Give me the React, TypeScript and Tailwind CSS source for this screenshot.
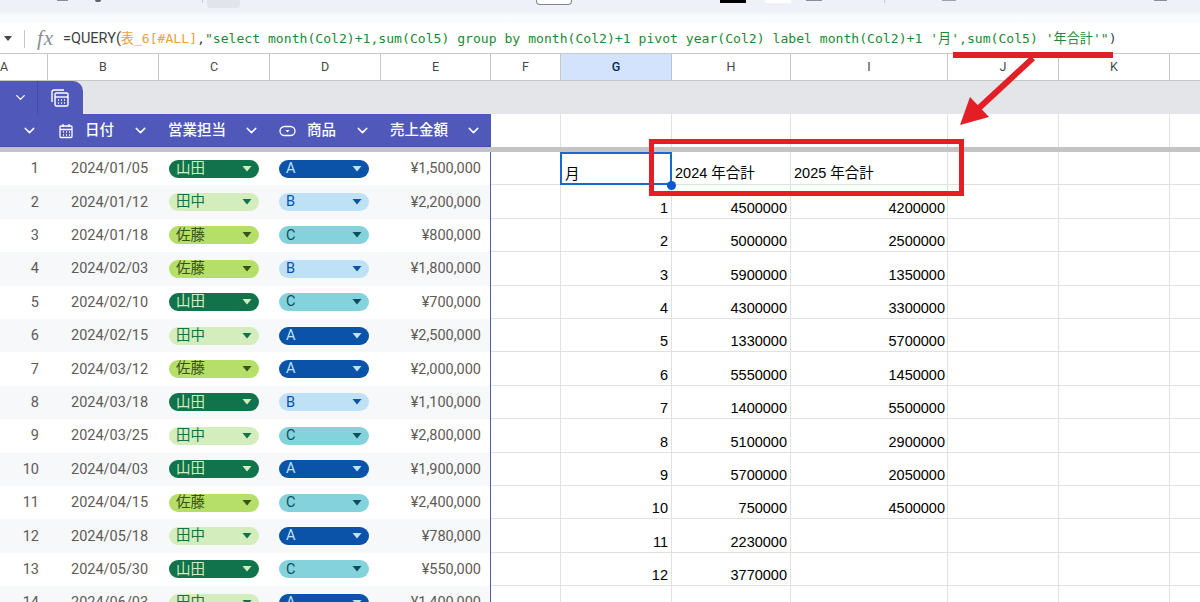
import { ChevronDown } from "lucide-react";

const font = "font-['Roboto','Noto_Sans_CJK_JP',sans-serif]";

type Person = "山田" | "田中" | "佐藤";
type Product = "A" | "B" | "C";

const personStyle: Record<Person, string> = {
  山田: "bg-[#11734b] text-[#d4edbc]",
  田中: "bg-[#d4edbc] text-[#11734b]",
  佐藤: "bg-[#b5df68] text-[#38521a]",
};

const productStyle: Record<Product, string> = {
  A: "bg-[#0a53a8] text-[#bfe1f6]",
  B: "bg-[#bfe1f6] text-[#0a53a8]",
  C: "bg-[#84d3dc] text-[#0b4f5a]",
};

const orders: [number, string, Person, Product, string][] = [
  [1, "2024/01/05", "山田", "A", "¥1,500,000"],
  [2, "2024/01/12", "田中", "B", "¥2,200,000"],
  [3, "2024/01/18", "佐藤", "C", "¥800,000"],
  [4, "2024/02/03", "佐藤", "B", "¥1,800,000"],
  [5, "2024/02/10", "山田", "C", "¥700,000"],
  [6, "2024/02/15", "田中", "A", "¥2,500,000"],
  [7, "2024/03/12", "佐藤", "A", "¥2,000,000"],
  [8, "2024/03/18", "山田", "B", "¥1,100,000"],
  [9, "2024/03/25", "田中", "C", "¥2,800,000"],
  [10, "2024/04/03", "山田", "A", "¥1,900,000"],
  [11, "2024/04/15", "佐藤", "C", "¥2,400,000"],
  [12, "2024/05/18", "田中", "A", "¥780,000"],
  [13, "2024/05/30", "山田", "C", "¥550,000"],
  [14, "2024/06/03", "田中", "A", "¥1,400,000"],
];

const pivot: [string, string, string][] = [
  ["1", "4500000", "4200000"],
  ["2", "5000000", "2500000"],
  ["3", "5900000", "1350000"],
  ["4", "4300000", "3300000"],
  ["5", "1330000", "5700000"],
  ["6", "5550000", "1450000"],
  ["7", "1400000", "5500000"],
  ["8", "5100000", "2900000"],
  ["9", "5700000", "2050000"],
  ["10", "750000", "4500000"],
  ["11", "2230000", ""],
  ["12", "3770000", ""],
  ["", "", ""],
];

function Chip({ label, className }: { label: string; className: string }) {
  return (
    <div className={`flex h-[18px] w-[90px] items-center justify-between rounded-full pl-[7px] pr-[4px] text-[14.5px] ${className}`}>
      <span>{label}</span>
      <svg width="14" height="6" viewBox="0 0 14 6" className="mr-[1px]">
        <path d="M2.5 0h9L7 5.5z" fill="currentColor" />
      </svg>
    </div>
  );
}

function HeaderCol({ width, label, icon }: { width: string; label: string; icon?: React.ReactNode }) {
  return (
    <div className={`flex h-full items-center pl-[10px] pr-[9px] pt-[1px] ${width}`}>
      {icon}
      <span className="flex-1 truncate pt-[1px] text-[14.5px] font-medium">{label}</span>
      <ChevronDown size={17} strokeWidth={2} className="shrink-0" />
    </div>
  );
}

function ColumnHead({ label, width, active }: { label: string; width: string; active?: boolean }) {
  return (
    <div
      className={`flex h-full shrink-0 items-center justify-center border-r text-[12.5px] ${width} ${
        active ? "border-[#b5c4dc] bg-[#d3e3fd] font-medium text-[#0b2a5b]" : "border-[#c7c7c7] text-[#444746]"
      }`}
    >
      {label}
    </div>
  );
}

function RightCells({ month, y2024, y2025 }: { month?: string; y2024?: string; y2025?: string }) {
  return (
    <>
      <div className="h-full w-[70px] shrink-0 border-r border-b border-[#e1e1e1]" />
      <div className="flex h-full w-[111px] shrink-0 items-end justify-end border-r border-b border-[#e1e1e1] pr-[3px] leading-[19px]">
        {month}
      </div>
      <div className="flex h-full w-[119px] shrink-0 items-end justify-end border-r border-b border-[#e1e1e1] pr-[3px] leading-[19px]">
        {y2024}
      </div>
      <div className="flex h-full w-[157px] shrink-0 items-end justify-end border-r border-b border-[#e1e1e1] pr-[2px] leading-[19px]">
        {y2025}
      </div>
      <div className="h-full w-[111px] shrink-0 border-r border-b border-[#e1e1e1]" />
      <div className="h-full w-[111px] shrink-0 border-r border-b border-[#e1e1e1]" />
      <div className="h-full flex-1 border-b border-[#e1e1e1]" />
    </>
  );
}

function OrderRow({ order, index }: { order: (typeof orders)[number]; index: number }) {
  const [no, date, person, product, amount] = order;
  return (
    <div className={`flex h-[33.4px] w-[491px] shrink-0 items-center border-r border-[#5059b5] text-[14.5px] text-[#5f5a58] ${index % 2 ? "bg-[#f6f8f9]" : "bg-white"}`}>
      <div className="w-[47px] pr-[8px] pt-[1px] text-right">{no}</div>
      <div className="w-[111px] pl-[24px] pt-[1px]">{date}</div>
      <div className="w-[111px] pl-[11px]">
        <Chip label={person} className={personStyle[person]} />
      </div>
      <div className="w-[111px] pl-[10px]">
        <Chip label={product} className={productStyle[product]} />
      </div>
      <div className="flex-1 pr-[9px] pt-[1px] text-right">{amount}</div>
    </div>
  );
}

export default function App() {
  return (
    <div className={`relative h-[602px] w-[1200px] overflow-hidden bg-white text-[14px] text-[#1f1f1f] ${font}`}>
      {/* toolbar, cropped at the top of the picture */}
      <div className="flex h-[23px] items-start bg-gradient-to-b from-[#eef1f7] from-50% to-[#f9fbfd] to-70%">
        <div className="ml-[57px] h-[1px] w-[11px] bg-[#8a8d91]" />
        <div className="ml-[27px] h-[2px] w-[6px] rounded-b bg-[#5f6368]" />
        <div className="ml-[101px] h-[3px] w-[1px] bg-[#c7c7c7]" />
        <div className="ml-[4px] h-[8px] w-[33px] rounded-b bg-[#e1e5ea]" />
        <div className="ml-[296px] h-[5px] w-[36px] rounded-b border border-t-0 border-[#80868b] bg-white" />
        <div className="ml-[148px] h-[3px] w-[26px] bg-black" />
        <div className="ml-[19px] h-[3px] w-[26px] bg-white" />
        <div className="ml-[15px] h-[1px] w-[16px] bg-[#8a8d91]" />
        <div className="ml-[62px] h-[3px] w-[1px] bg-[#c7c7c7]" />
        <div className="ml-[57px] h-[1px] w-[14px] bg-[#a0a4a8]" />
        <div className="ml-[198px] h-[1px] w-[13px] bg-[#8a8d91]" />
      </div>

      {/* formula bar */}
      <div className="flex h-[31px] items-center border-b border-[#c7c7c7] bg-white pt-[1px]">
        <svg width="10" height="6" viewBox="0 0 10 6" className="ml-[3px]">
          <path d="M1 0h8L5 5z" fill="#444746" />
        </svg>
        <div className="ml-[11px] h-[18px] w-px bg-[#c7c7c7]" />
        <span className="ml-[12px] w-[26px] font-['Liberation_Serif',serif] text-[21px] italic tracking-[1px] text-[#8a8d91]">fx</span>
        <div className="whitespace-nowrap font-['DejaVu_Sans_Mono','Noto_Sans_CJK_JP',monospace] text-[13.1px] text-[#3c4043]">
          <span className="font-['Roboto','Noto_Sans_CJK_JP',sans-serif] text-[14.5px]">=QUERY(</span>
          <span className="text-[#e8a33d]">表_6[#ALL]</span>
          <span>,</span>
          <span className="text-[#1a8a35]">
            "select month(Col2)+1,sum(Col5) group by month(Col2)+1 pivot year(Col2) label month(Col2)+1 '月',sum(Col5) '年合計'"
          </span>
          <span>)</span>
        </div>
      </div>

      {/* column letters */}
      <div className="flex h-[27px] border-b border-[#c7c7c7] bg-white">
        <div className="flex h-full w-[48px] shrink-0 items-center border-r border-[#c7c7c7] text-[12.5px] text-[#444746]">A</div>
        <ColumnHead label="B" width="w-[111px]" />
        <ColumnHead label="C" width="w-[111px]" />
        <ColumnHead label="D" width="w-[111px]" />
        <ColumnHead label="E" width="w-[110px]" />
        <ColumnHead label="F" width="w-[70px]" />
        <ColumnHead label="G" width="w-[111px]" active />
        <ColumnHead label="H" width="w-[119px]" />
        <ColumnHead label="I" width="w-[157px]" />
        <ColumnHead label="J" width="w-[111px]" />
        <ColumnHead label="K" width="w-[111px]" />
      </div>

      {/* table tab strip */}
      <div className="flex h-[33px] items-end bg-[#e3e5e9]">
        <div className="flex h-[33px] w-[83px] rounded-tr-[10px] bg-[#5059b9] text-white">
          <div className="flex w-[38px] items-center justify-end border-r border-[#444ca6] pr-[9px]">
            <ChevronDown size={15} strokeWidth={2.2} />
          </div>
          <div className="flex flex-1 items-center pl-[13px]">
            <svg width="18" height="18" viewBox="0 0 18 18" fill="none" stroke="currentColor" strokeWidth="1.4">
              <path d="M1 13V3a2 2 0 0 1 2-2h10" />
              <rect x="4" y="4" width="13" height="13" rx="1.5" />
              <path d="M4 8h13" />
              <path d="M7 11h1M10 11h1M13 11h1M7 14h1M10 14h1M13 14h1" strokeWidth="1.6" />
            </svg>
          </div>
        </div>
      </div>

      {/* table header row, with the empty cells beside it */}
      <div className="flex h-[33px]">
        <div className="flex h-full w-[491px] shrink-0 border-b border-[#444ca6] bg-[#5059b9] text-white">
          <div className="flex h-full w-[47px] items-center justify-end pr-[9px] pt-[1px]">
            <ChevronDown size={17} strokeWidth={2} />
          </div>
          <HeaderCol
            width="w-[111px]"
            label="日付"
            icon={
              <svg width="16" height="16" viewBox="0 0 16 16" fill="none" stroke="currentColor" strokeWidth="1.3" className="mr-[11px] ml-[1px] shrink-0">
                <rect x="2" y="3" width="12" height="11.5" rx="1" />
                <path d="M2 6.5h12M5 1v3M11 1v3M5 9h1M8 9h1M11 9h1M5 12h1M8 12h1M11 12h1" />
              </svg>
            }
          />
          <HeaderCol width="w-[111px]" label="営業担当" />
          <HeaderCol
            width="w-[111px]"
            label="商品"
            icon={
              <svg width="17" height="12" viewBox="0 0 17 12" fill="none" stroke="currentColor" strokeWidth="1.3" className="mr-[11px] shrink-0">
                <rect x="1" y="1.5" width="15" height="9" rx="4.5" />
                <path d="M6.5 5h4L8.5 7.5z" fill="currentColor" stroke="none" />
              </svg>
            }
          />
          <HeaderCol width="flex-1" label="売上金額" />
        </div>
        <div className="h-full w-[70px] shrink-0 border-r border-[#e1e1e1]" />
        <div className="h-full w-[111px] shrink-0 border-r border-[#e1e1e1]" />
        <div className="h-full w-[119px] shrink-0 border-r border-[#e1e1e1]" />
        <div className="h-full w-[157px] shrink-0 border-r border-[#e1e1e1]" />
        <div className="h-full w-[111px] shrink-0 border-r border-[#e1e1e1]" />
        <div className="h-full w-[111px] shrink-0 border-r border-[#e1e1e1]" />
      </div>

      {/* freeze bar */}
      <div className="h-[5px] bg-[#c4c4c4]" />

      {/* data rows: the table on the left, the query result on the right */}
      <div className="flex">
        <div className="flex w-[491px] shrink-0 flex-col">
          {orders.map((order, i) => (
            <OrderRow key={order[0]} order={order} index={i} />
          ))}
        </div>
        <div className="flex flex-1 flex-col font-['Liberation_Sans','Noto_Sans_CJK_JP',sans-serif] text-[14.5px] text-black">
          <div className="flex h-[33.4px] shrink-0">
            <div className="h-full w-[70px] shrink-0 border-r border-b border-[#e1e1e1]" />
            <div className="flex h-full w-[111px] shrink-0 items-end pb-[1px] pl-[4px] leading-[19px]">月</div>
            <div className="flex h-full w-[119px] shrink-0 items-end border-r border-b border-[#e1e1e1] pb-[1px] pl-[3px] leading-[19px]">2024 年合計</div>
            <div className="flex h-full w-[157px] shrink-0 items-end border-r border-b border-[#e1e1e1] pb-[1px] pl-[3px] leading-[19px]">2025 年合計</div>
            <div className="h-full w-[111px] shrink-0 border-r border-b border-[#e1e1e1]" />
            <div className="h-full w-[111px] shrink-0 border-r border-b border-[#e1e1e1]" />
            <div className="h-full flex-1 border-b border-[#e1e1e1]" />
          </div>
          {pivot.map(([m, a, b], i) => (
            <div key={i} className="flex h-[33.4px] shrink-0">
              <RightCells month={m} y2024={a} y2025={b} />
            </div>
          ))}
        </div>
      </div>

      {/* selected cell */}
      <div className="absolute left-[560px] top-[152px] h-[33px] w-[112px] border-2 border-[#1967d2]" />
      <div className="absolute left-[667px] top-[181px] h-[9px] w-[9px] rounded-full bg-[#0b57d0]" />

      {/* red callout over the screenshot */}
      <div className="absolute left-[649px] top-[139px] h-[57px] w-[315px] border-[5px] border-[#e31e24]" />
      <div className="absolute left-[953px] top-[52px] h-[6px] w-[160px] bg-[#e31e24]" />
      <svg width="80" height="70" viewBox="0 0 80 70" className="absolute left-[955px] top-[56px]">
        <path d="M78 2 L24 52" stroke="#e31e24" strokeWidth="6" fill="none" />
        <path d="M5 69 L15 41 L34 61 Z" fill="#e31e24" />
      </svg>
    </div>
  );
}
